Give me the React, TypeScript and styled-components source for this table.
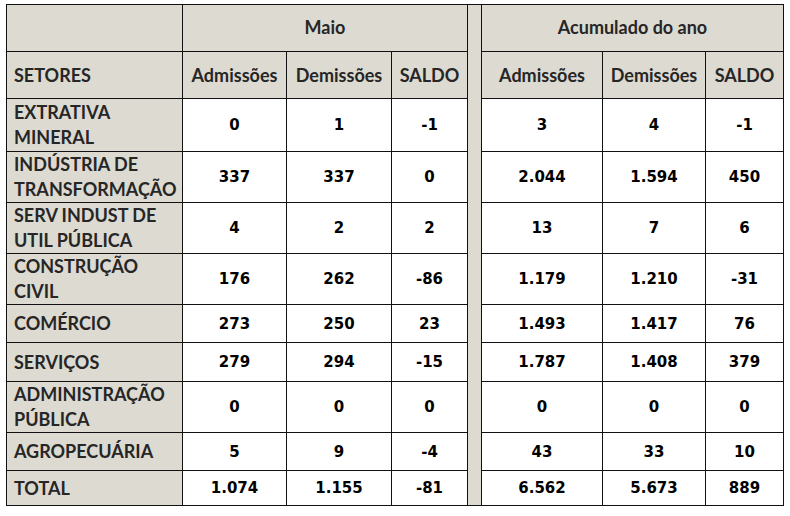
import React from "react";
import styled, { createGlobalStyle } from "styled-components";

const GlobalStyle = createGlobalStyle`
  html, body {
    margin: 0;
    padding: 0;
    background: #ffffff;
  }
`;

type Row = {
  label: string[];
  values: string[];
  height: number;
};

const rows: Row[] = [
  { label: ["EXTRATIVA", "MINERAL"], values: ["0", "1", "-1", "3", "4", "-1"], height: 53 },
  { label: ["INDÚSTRIA DE", "TRANSFORMAÇÃO"], values: ["337", "337", "0", "2.044", "1.594", "450"], height: 51 },
  { label: ["SERV INDUST DE", "UTIL PÚBLICA"], values: ["4", "2", "2", "13", "7", "6"], height: 51 },
  { label: ["CONSTRUÇÃO", "CIVIL"], values: ["176", "262", "-86", "1.179", "1.210", "-31"], height: 51 },
  { label: ["COMÉRCIO"], values: ["273", "250", "23", "1.493", "1.417", "76"], height: 38 },
  { label: ["SERVIÇOS"], values: ["279", "294", "-15", "1.787", "1.408", "379"], height: 39 },
  { label: ["ADMINISTRAÇÃO", "PÚBLICA"], values: ["0", "0", "0", "0", "0", "0"], height: 51 },
  { label: ["AGROPECUÁRIA"], values: ["5", "9", "-4", "43", "33", "10"], height: 38 },
  { label: ["TOTAL"], values: ["1.074", "1.155", "-81", "6.562", "5.673", "889"], height: 35 },
];

const colWidths = [176, 104, 105, 76, 14, 121, 103, 78];

const Page = styled.div`
  padding: 4px 0 0 6px;
`;

const Table = styled.table`
  border-collapse: collapse;
  table-layout: fixed;
  width: 777px;
  border: 1.5px solid #111;
`;

const Row = styled.tr<{ $h: number }>`
  height: ${(p) => p.$h}px;
`;

const HeadCell = styled.th<{ $left?: boolean }>`
  background: #dddad1;
  border: 1.5px solid #111;
  color: #262626;
  font-family: Lato, "Liberation Sans", sans-serif;
  font-weight: 700;
  font-size: 18px;
  line-height: 22px;
  text-align: ${(p) => (p.$left ? "left" : "center")};
  padding: ${(p) => (p.$left ? "0 0 0 7px" : "0")};
  vertical-align: middle;
  white-space: nowrap;
  overflow: hidden;
`;

const GroupCell = styled(HeadCell)`
  padding-bottom: 2px;
`;

const LabelCell = styled.td`
  background: #dddad1;
  border: 1.5px solid #111;
  color: #262626;
  font-family: Lato, "Liberation Sans", sans-serif;
  font-weight: 700;
  font-size: 18px;
  line-height: 25px;
  padding: 0 0 0 7px;
  vertical-align: middle;
  white-space: nowrap;
  overflow: hidden;
`;

const NumCell = styled.td`
  background: #ffffff;
  border: 1.5px solid #111;
  color: #000;
  font-family: "DejaVu Sans", Verdana, sans-serif;
  font-weight: 700;
  font-size: 15px;
  line-height: 20px;
  padding: 0;
  text-align: center;
  vertical-align: middle;
`;

const GapCell = styled.td`
  background: #dddad1;
  border: 1.5px solid #111;
  padding: 0;
`;

export default function App() {
  return (
    <>
      <GlobalStyle />
      <Page>
        <Table>
          <colgroup>
            {colWidths.map((w, i) => (
              <col key={i} style={{ width: w }} />
            ))}
          </colgroup>
          <tbody>
            <Row $h={47}>
              <HeadCell />
              <GroupCell colSpan={3}>Maio</GroupCell>
              <GapCell rowSpan={rows.length + 2} />
              <GroupCell colSpan={3}>Acumulado do ano</GroupCell>
            </Row>
            <Row $h={47}>
              <HeadCell $left>SETORES</HeadCell>
              <HeadCell>Admissões</HeadCell>
              <HeadCell>Demissões</HeadCell>
              <HeadCell>SALDO</HeadCell>
              <HeadCell>Admissões</HeadCell>
              <HeadCell>Demissões</HeadCell>
              <HeadCell>SALDO</HeadCell>
            </Row>
            {rows.map((r) => (
              <Row key={r.label.join(" ")} $h={r.height}>
                <LabelCell>
                  {r.label.map((line, i) => (
                    <div key={i}>{line}</div>
                  ))}
                </LabelCell>
                {r.values.map((v, i) => (
                  <NumCell key={i}>{v}</NumCell>
                ))}
              </Row>
            ))}
          </tbody>
        </Table>
      </Page>
    </>
  );
}
